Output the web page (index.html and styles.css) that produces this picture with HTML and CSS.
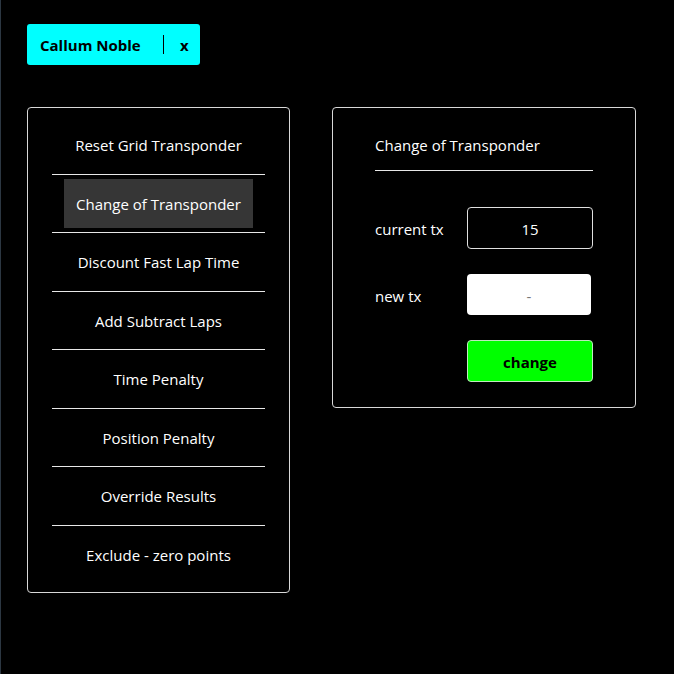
FILE: index.html
```html
<!DOCTYPE html>
<html>
<head>
<meta charset="utf-8">
<link rel="stylesheet" href="styles.css">
</head>
<body>
<div class="page">
  <div class="chip">
    <span class="chip-name">Callum Noble</span>
    <span class="chip-div"></span>
    <span class="chip-x">x</span>
  </div>
  <div class="main">
    <div class="menu">
      <div class="item"><span class="lbl">Reset Grid Transponder</span></div>
      <div class="item"><span class="lbl active">Change of Transponder</span></div>
      <div class="item"><span class="lbl">Discount Fast Lap Time</span></div>
      <div class="item"><span class="lbl">Add Subtract Laps</span></div>
      <div class="item"><span class="lbl">Time Penalty</span></div>
      <div class="item"><span class="lbl">Position Penalty</span></div>
      <div class="item"><span class="lbl">Override Results</span></div>
      <div class="item"><span class="lbl">Exclude - zero points</span></div>
    </div>
    <div class="panel">
      <div class="title">Change of Transponder</div>
      <div class="row first">
        <span class="label">current tx</span>
        <div class="box current">15</div>
      </div>
      <div class="row">
        <span class="label">new tx</span>
        <div class="box newtx">-</div>
      </div>
      <div class="row">
        <span class="label"></span>
        <div class="box btn">change</div>
      </div>
    </div>
  </div>
</div>
</body>
</html>
```
FILE: styles.css
```css
html, body {
  margin: 0;
  padding: 0;
  background: #000;
  height: 100%;
}
body {
  border-left: 1px solid #2c3742;
  box-sizing: border-box;
  font-family: "Open Sans", "Noto Sans", sans-serif;
  font-size: 15px;
  color: #fff;
}
.page {
  padding: 24px 0 0 26px;
}
.chip {
  display: inline-flex;
  align-items: center;
  background: #00ffff;
  color: #000;
  font-weight: bold;
  border-radius: 3px;
  height: 41px;
  box-sizing: border-box;
  padding: 0 12px 0 13px;
  width: 173px;
}
.chip-name {
  flex: 1;
}
.chip-div {
  width: 1px;
  height: 19px;
  background: #000;
  margin-right: 16px;
}
.chip-x {
  width: 8px;
}
.main {
  display: flex;
  align-items: flex-start;
  gap: 42px;
  margin-top: 42px;
}
.menu {
  width: 263px;
  border: 1px solid #d8d8d8;
  border-radius: 4px;
  padding: 8px 24px 9px;
  box-sizing: border-box;
}
.item {
  text-align: center;
  padding: 4.25px 0;
  border-bottom: 1px solid #e8e8e8;
}
.item:last-child {
  border-bottom: none;
}
.lbl {
  display: inline-block;
  box-sizing: border-box;
  height: 49px;
  line-height: 47px;
  padding: 2px 12px 0;
}
.lbl.active {
  background: #363636;
}
.panel {
  width: 304px;
  border: 1px solid #d8d8d8;
  border-radius: 4px;
  padding: 26px 42px 25px;
  box-sizing: border-box;
}
.title {
  line-height: 22px;
  padding-bottom: 14px;
  border-bottom: 1px solid #e8e8e8;
}
.row {
  display: flex;
  align-items: center;
  margin-top: 25px;
}
.row.first {
  margin-top: 36px;
}
.label {
  width: 92px;
  padding-top: 2px;
}
.box {
  box-sizing: border-box;
  width: 126px;
  height: 42px;
  border-radius: 4px;
  display: flex;
  align-items: center;
  justify-content: center;
  padding-top: 2px;
}
.current {
  border: 1px solid #e0e0e0;
  background: #000;
}
.newtx {
  background: #fff;
  color: #777;
  width: 124px;
  height: 41px;
}
.btn {
  background: #00ff00;
  color: #000;
  font-weight: bold;
  border: 1px solid #bfe8bf;
}
```
